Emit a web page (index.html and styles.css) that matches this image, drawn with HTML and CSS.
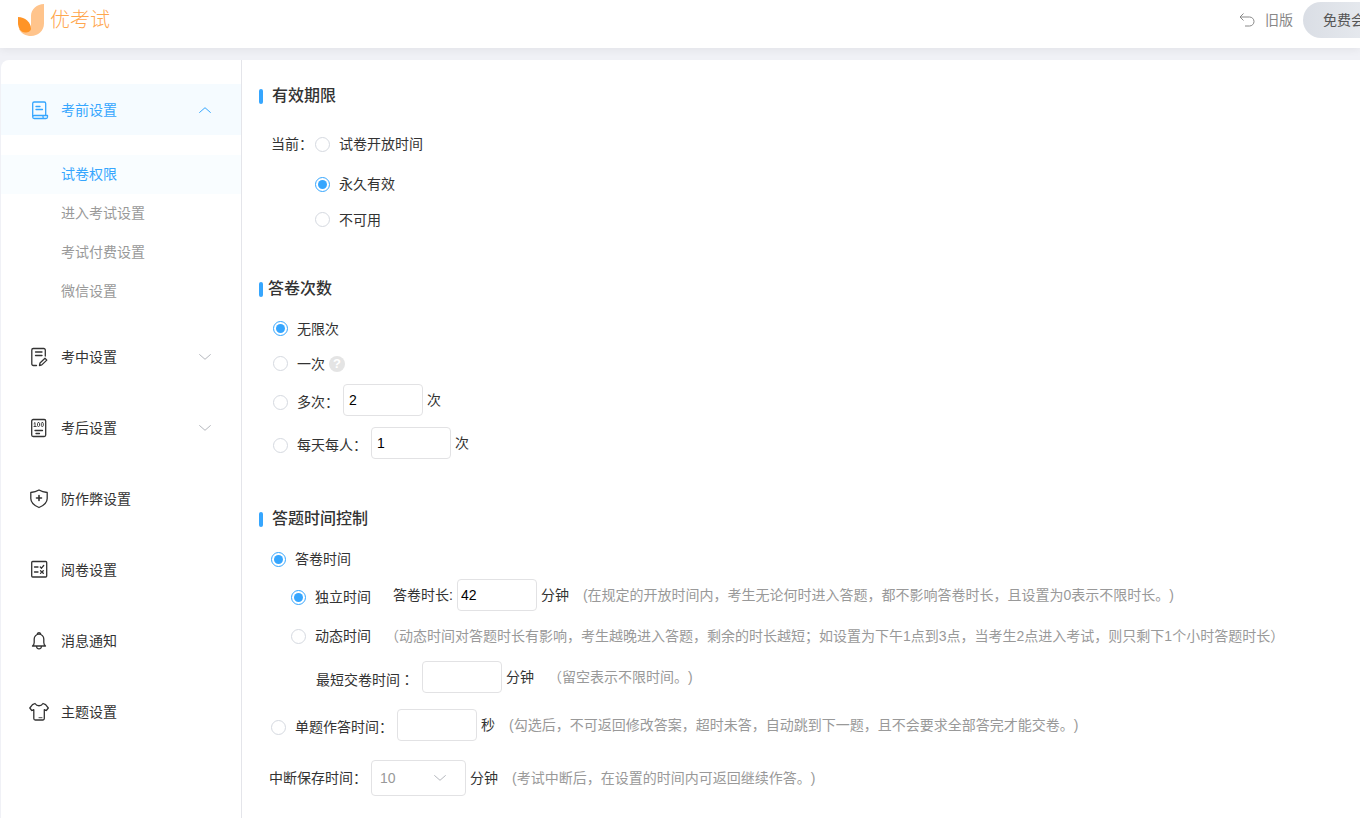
FILE: index.html
```html
<!DOCTYPE html>
<html lang="zh-CN">
<head>
<meta charset="utf-8">
<meta name="viewport" content="width=device-width, initial-scale=1">
<title>优考试</title>
<link rel="stylesheet" href="styles.css">
</head>
<body>
<header class="topbar">
  <a class="brand" href="#">
    <svg class="brand-mark" viewBox="0 0 26 32" aria-hidden="true">
      <path fill="#ffc48c" d="M26 0v19.500C26 27 20 32 13 32 8 32 3 29.500 1 25l12-1V12C13 5 19 0 26 0z"/>
      <path fill="#ff9426" d="M0 13c7 0 13 5.500 13 11.500 0 2.500-2.500 4-6 4C3 28.500 0 24 0 19z"/>
    </svg>
    <span class="brand-name">优考试</span>
  </a>
  <div class="topbar-actions">
    <a class="old-version" href="#">
      <svg class="back-icon" viewBox="0 0 16 14" aria-hidden="true"><path d="M4.500 .5 1 4l3.500 3.500M1 4h9.500a4.500 4.500 0 0 1 0 9H6"/></svg>
      旧版
    </a>
    <button class="member" type="button">免费会员</button>
  </div>
</header>

<div class="panel">
  <nav class="sidebar" aria-label="设置">
    <button class="nav-item nav-item--active" type="button" aria-expanded="true">
      <svg class="nav-icon" viewBox="0 0 20 20" aria-hidden="true"><path d="M3.700 16.500V3.500A1.500 1.500 0 0 1 5.200 2h10a1.500 1.500 0 0 1 1.500 1.500v12M7 6.500h4M7 9.500h6.500M5.200 15.500H18.500v1.500a1.500 1.500 0 0 1-1.500 1.500H5.200a1.500 1.500 0 0 1 0-3zM15.500 18.500a1.500 1.500 0 0 1-1.500-1.500v-1.500"/></svg>
      <span>考前设置</span>
      <svg class="chevron" viewBox="0 0 12 6" aria-hidden="true"><path d="M.3 5.700 6 .7l5.700 5"/></svg>
    </button>
    <ul class="subnav">
      <li><a class="subnav-link subnav-link--active" href="#">试卷权限</a></li>
      <li><a class="subnav-link" href="#">进入考试设置</a></li>
      <li><a class="subnav-link" href="#">考试付费设置</a></li>
      <li><a class="subnav-link" href="#">微信设置</a></li>
    </ul>
    <button class="nav-item" type="button" aria-expanded="false">
      <svg class="nav-icon" viewBox="0 0 20 20" aria-hidden="true"><path d="M16.300 9V3a1.500 1.500 0 0 0-1.500-1.500h-10.500a1.500 1.500 0 0 0-1.500 1.500v14A1.500 1.500 0 0 0 4.300 18.500H7.500M6.500 5h6.500M6.500 8.500h6.500M10.500 18.500l.5-2.500 5-4.700 1.800 1.800-5 4.800z"/></svg>
      <span>考中设置</span>
      <svg class="chevron" viewBox="0 0 12 6" aria-hidden="true"><path d="M.3.300 6 5.300l5.700-5"/></svg>
    </button>
    <button class="nav-item" type="button" aria-expanded="false">
      <svg class="nav-icon" viewBox="0 0 20 20" aria-hidden="true"><rect x="2.700" y="1.500" width="14" height="17" rx="1.500"/><path d="M6 12.500h7.500M7 15.500h3.500"/><path class="thin" d="M5 5.500 6 4.500v4M5 8.500h2.200"/><rect class="thin" x="8.500" y="4.500" width="2" height="4" rx="1"/><rect class="thin" x="12.300" y="4.500" width="2" height="4" rx="1"/></svg>
      <span>考后设置</span>
      <svg class="chevron" viewBox="0 0 12 6" aria-hidden="true"><path d="M.3.300 6 5.300l5.700-5"/></svg>
    </button>
    <a class="nav-item" href="#">
      <svg class="nav-icon" viewBox="0 0 20 20" aria-hidden="true"><path d="M10 1c2.500 1.500 5 2.200 8.200 2.500v6c0 4-3.500 7-8.200 9-4.700-2-8.200-5-8.200-9v-6C5 3.200 7.500 2.500 10 1z"/><path class="bold" d="M10 6.500v5M7.500 9h5"/></svg>
      <span>防作弊设置</span>
    </a>
    <a class="nav-item" href="#">
      <svg class="nav-icon" viewBox="0 0 20 20" aria-hidden="true"><rect x="2.700" y="1.500" width="15" height="15.500" rx="1"/><path d="M5.500 7H9M5.500 12H9M11.300 7l1.200 1.200 2.200-2.700M11.500 10.800l2.800 2.500M14.300 10.800l-2.800 2.500"/></svg>
      <span>阅卷设置</span>
    </a>
    <a class="nav-item" href="#">
      <svg class="nav-icon" viewBox="0 0 20 20" aria-hidden="true"><path d="M3.500 15h13c-1.500-1.200-1.700-2-1.700-3.500V8a4.800 4.800 0 0 0-9.600 0v3.500c0 1.500-.2 2.300-1.700 3.500zM7.500 15.500c.5 3.200 4.500 3.200 5 0M8.300 2.800c.4-1.500 3-1.500 3.400 0"/></svg>
      <span>消息通知</span>
    </a>
    <a class="nav-item" href="#">
      <svg class="nav-icon" viewBox="0 0 20 20" aria-hidden="true"><path d="M6 1.500 3.500 2.700.8 6l2 2.500 2-.8v8.800a1.500 1.500 0 0 0 1.500 1.500h7.500a1.500 1.500 0 0 0 1.500-1.500V7.700l2 .8 2-2.500-2.700-3.300L14 1.500c-2 3-6 3-8 0z"/><path class="thin" d="M10 15.700h3"/></svg>
      <span>主题设置</span>
    </a>
  </nav>

  <main class="content">
    <section class="group">
      <h2 class="title">有效期限</h2>
      <div class="options options--period" role="radiogroup" aria-label="有效期限">
        <div class="row row--first"><span class="period-label">当前：</span><label class="choice"><input type="radio" name="period">试卷开放时间</label></div>
        <div class="row period-row"><label class="choice"><input type="radio" name="period" checked>永久有效</label></div>
        <div class="row row--short period-row"><label class="choice"><input type="radio" name="period">不可用</label></div>
      </div>
    </section>

    <section class="group">
      <h2 class="title title--close">答卷次数</h2>
      <div class="options options--times" role="radiogroup" aria-label="答卷次数">
        <div class="row row--short"><label class="choice"><input type="radio" name="times" checked>无限次</label></div>
        <div class="row row--short"><label class="choice"><input type="radio" name="times">一次</label><button class="help" type="button" aria-label="说明">?</button></div>
        <div class="row row--field"><label class="choice choice--low"><input type="radio" name="times">多次：</label><input class="field" type="text" value="2" aria-label="多次"><span>次</span></div>
        <div class="row row--field"><label class="choice choice--low"><input type="radio" name="times">每天每人：</label><input class="field" type="text" value="1" aria-label="每天每人"><span>次</span></div>
      </div>
    </section>

    <section class="group">
      <h2 class="title">答题时间控制</h2>
      <div class="options options--control">
        <div class="row"><label class="choice"><input type="radio" name="control" checked>答卷时间</label></div>
        <div class="row row--nested">
          <label class="choice choice--low"><input type="radio" name="mode" checked>独立时间</label>
          <label class="duration-label" for="duration">答卷时长:</label>
          <input class="field field--tight" id="duration" type="text" value="42"><span>分钟</span>
          <span class="hint">(在规定的开放时间内，考生无论何时进入答题，都不影响答卷时长，且设置为0表示不限时长。)</span>
        </div>
        <div class="row row--tall row--nested">
          <label class="choice"><input type="radio" name="mode">动态时间</label>
          <span class="hint">（动态时间对答题时长有影响，考生越晚进入答题，剩余的时长越短；如设置为下午1点到3点，当考生2点进入考试，则只剩下1个小时答题时长）</span>
        </div>
        <div class="row row--minimum">
          <label class="minimum-label" for="minimum">最短交卷时间<span lang="zh-TW" class="mid-colon">：</span></label>
          <input class="field" id="minimum" type="text"><span>分钟</span>
          <span class="hint">（留空表示不限时间。)</span>
        </div>
        <div class="row row--spacious">
          <label class="choice choice--low"><input type="radio" name="control">单题作答时间：</label>
          <input class="field" type="text" aria-label="单题作答时间"><span>秒</span>
          <span class="hint">(勾选后，不可返回修改答案，超时未答，自动跳到下一题，且不会要求全部答完才能交卷。)</span>
        </div>
        <div class="row row--tall row--save">
          <label for="save-time">中断保存时间：</label>
          <span class="select-box">
            <select id="save-time"><option>10</option></select>
            <svg class="chevron" viewBox="0 0 12 6" aria-hidden="true"><path d="M.3.300 6 5.300l5.700-5"/></svg>
          </span>
          <span>分钟</span>
          <span class="hint">(考试中断后，在设置的时间内可返回继续作答。)</span>
        </div>
      </div>
    </section>
  </main>
</div>
</body>
</html>
```
FILE: styles.css
```css
* {
  box-sizing: border-box;
}

body {
  margin: 0;
  min-height: 100vh;
  display: flex;
  flex-direction: column;
  overflow-x: hidden;
  background: #f0f1f6;
  color: #333;
  font: 14px/20px "Liberation Sans", "Noto Sans CJK SC", sans-serif;
  text-spacing-trim: space-all;
}

a {
  color: inherit;
  text-decoration: none;
}

button,
input,
select {
  font: inherit;
}

svg {
  fill: none;
  flex: none;
}

/* Top bar */
.topbar {
  height: 48px;
  padding: 0 0 8px 18px;
  display: flex;
  align-items: center;
  justify-content: space-between;
  background: #fff;
  box-shadow: 0 2px 8px rgba(0, 0, 0, 0.06);
}

.brand {
  display: flex;
  align-items: center;
  gap: 6px;
}

.brand-mark {
  width: 26px;
  height: 32px;
}

.brand-name {
  color: #ffa64d;
  font-size: 20px;
  font-weight: 300;
  line-height: 28px;
}

.topbar-actions {
  display: flex;
  align-items: center;
  gap: 10px;
  margin-right: -39px;
}

.old-version {
  display: flex;
  align-items: center;
  gap: 10px;
  color: #888;
}

.back-icon {
  width: 16px;
  height: 14px;
  stroke: #888;
}

.member {
  height: 36px;
  padding: 0 20px;
  border: 0;
  border-radius: 18px;
  background: linear-gradient(90deg, #dadee5, #eceff3);
  color: #555;
}

/* Panel */
.panel {
  flex: 1;
  display: flex;
  margin: 12px 0 0 1px;
  border-radius: 8px 0 0 0;
  background: #fff;
}

.sidebar {
  flex: none;
  width: 241px;
  padding-top: 24px;
  display: flex;
  flex-direction: column;
  gap: 20px;
  border-right: 1px solid #e4e5ea;
}

.nav-item {
  height: 51px;
  padding: 0 30px 0 28px;
  display: flex;
  align-items: center;
  gap: 12px;
  border: 0;
  background: none;
  color: #333;
}

.nav-item--active {
  background: #f5fbff;
  color: #36a6fe;
}

.nav-icon {
  width: 20px;
  height: 20px;
  stroke: currentColor;
  stroke-width: 1.3;
  stroke-linecap: round;
  stroke-linejoin: round;
}

.nav-icon .thin {
  stroke-width: 0.9;
}

.nav-icon .bold {
  stroke-width: 1.6;
}

.chevron {
  width: 12px;
  height: 6px;
  margin-left: auto;
  stroke: #b4b7bd;
}

.nav-item--active .chevron {
  stroke: #36a6fe;
}

.subnav {
  margin: 0;
  padding: 0;
  list-style: none;
}

.subnav-link {
  display: block;
  padding: 0 0 0 60px;
  line-height: 39px;
  color: #999;
}

.subnav-link--active {
  background: #f9fdff;
  color: #36a6fe;
}

/* Settings form */
.content {
  flex: 1;
  min-width: 0;
  padding: 24px 0 16px 17px;
  display: flex;
  flex-direction: column;
  gap: 40px;
  white-space: nowrap;
}

.title {
  margin: 0 0 10px;
  display: flex;
  align-items: center;
  gap: 9px;
  font-size: 16px;
  font-weight: 500;
  line-height: 24px;
}

.title::before {
  content: "";
  width: 4px;
  height: 15px;
  border-radius: 2px;
  background: #36a6fe;
}

.title--close {
  gap: 5px;
}

.row {
  min-height: 36px;
  display: flex;
  align-items: center;
  gap: 4px;
}

.row--short {
  min-height: 35px;
}

.row--first {
  min-height: 44px;
}

.row--tall {
  min-height: 46px;
}

.row--spacious {
  min-height: 60px;
}

.options--period {
  padding: 4px 0 0 12px;
}

.period-label,
.period-row::before {
  content: "";
  width: 40px;
}

.options--times {
  padding-left: 14px;
}

.row--field {
  padding: 3px 0 8px;
}

.choice--low {
  padding-top: 4px;
}

.options--control {
  padding-left: 12px;
}

.row--nested {
  padding-left: 20px;
}

.row--minimum {
  padding-left: 45px;
}

.choice {
  display: flex;
  align-items: center;
  gap: 9px;
}

.choice input {
  appearance: none;
  width: 15px;
  height: 15px;
  margin: 0;
  border: 1px solid #d5d9e0;
  border-radius: 50%;
  background: #fff;
}

.choice input:checked {
  padding: 2px;
  border-color: #36a6fe;
  background: #36a6fe content-box;
}

.field {
  width: 80px;
  height: 32px;
  padding: 0 5px;
  border: 1px solid #e2e2e4;
  border-radius: 4px;
  background: #fff;
  color: #000;
}

.field--tight {
  padding: 0 3px;
}

.duration-label {
  margin-left: 18px;
}

.minimum-label {
  margin-right: 4px;
  padding-top: 4px;
}

.mid-colon {
  font-family: "Noto Sans CJK TC", sans-serif;
}

.hint {
  margin-left: 10px;
  color: #999;
}

.help {
  width: 16px;
  height: 16px;
  padding: 0;
  border: 0;
  border-radius: 50%;
  background: #e4e4e4;
  color: #fff;
  font-size: 13px;
  font-weight: bold;
  line-height: 16px;
}

.row--save {
  margin-left: -2px;
}

.select-box {
  width: 95px;
  display: grid;
  align-items: center;
}

.select-box select,
.select-box .chevron {
  grid-area: 1 / 1;
}

.select-box select {
  appearance: none;
  height: 36px;
  padding: 0 8px;
  border: 1px solid #e2e2e4;
  border-radius: 4px;
  background: #fff;
  color: #999;
}

.select-box .chevron {
  margin-right: 20px;
  pointer-events: none;
}
```
